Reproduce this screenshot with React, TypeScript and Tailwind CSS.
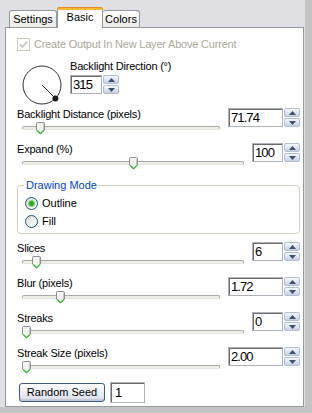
import React from 'react';

type Row = { label: string; value: string; thumb: number; wide: boolean };

const topRows: Row[] = [
  { label: 'Backlight Distance (pixels)', value: '71.74', thumb: 19, wide: true },
  { label: 'Expand (%)', value: '100', thumb: 112, wide: false },
];

const bottomRows: Row[] = [
  { label: 'Slices', value: '6', thumb: 15, wide: false },
  { label: 'Blur (pixels)', value: '1.72', thumb: 39, wide: true },
  { label: 'Streaks', value: '0', thumb: 5, wide: false },
  { label: 'Streak Size (pixels)', value: '2.00', thumb: 5, wide: true },
];

function Arrow({ up }: { up?: boolean }) {
  return (
    <div className="w-[16px] h-[9px] rounded-[2px] border border-[#b4bfd6] bg-gradient-to-b from-[#f6f8fc] to-[#c7d1e6] flex items-center justify-center">
      <svg width="7" height="4" viewBox="0 0 7 4">
        <path d={up ? 'M0 4 L3.5 0 L7 4 Z' : 'M0 0 L3.5 4 L7 0 Z'} fill="#3f4f6e" />
      </svg>
    </div>
  );
}

function Spin({ value, width }: { value: string; width: string }) {
  return (
    <div className="flex items-center gap-[1px]">
      <div
        className={`${width} h-[19px] border border-[#aeb3bb] shadow-[inset_1px_1px_0_#6b6b6b] bg-white flex items-center pl-[2px] text-[13px] tracking-[-0.9px] text-black`}
      >
        {value}
      </div>
      <div className="flex flex-col gap-[1px]">
        <Arrow up />
        <Arrow />
      </div>
    </div>
  );
}

function Thumb() {
  return (
    <svg width="9" height="13" viewBox="0 0 9 13">
      <path
        d="M1.5 0.5 H7.5 Q8.5 0.5 8.5 1.5 V8 L4.5 12 L0.5 8 V1.5 Q0.5 0.5 1.5 0.5 Z"
        fill="#f3f3ef"
        stroke="#8c8f92"
      />
      <path d="M1.2 8.4 L4.5 11.6 L7.8 8.4" stroke="#2fbf2f" strokeWidth="1.2" fill="none" />
      <path d="M7.5 1.5 V8" stroke="#c9c9c4" />
    </svg>
  );
}

function SliderRow({ row }: { row: Row }) {
  return (
    <div className="flex items-start h-[35px]">
      <div className="flex-1 flex flex-col">
        <div className="h-[13px] leading-[13px] tracking-[-0.2px]">{row.label}</div>
        <div className="relative h-[14px]">
          <div className="absolute left-[5px] right-0 top-[5px] h-[4px] rounded-[2px] border border-[#a9a8a2] border-b-[#e4e3dc] bg-[#eeede6]" />
          <div className="absolute top-[1px]" style={{ left: row.thumb }}>
            <Thumb />
          </div>
        </div>
      </div>
      <div className="ml-[8px]">
        <Spin value={row.value} width={row.wide ? 'w-[55px]' : 'w-[31px]'} />
      </div>
    </div>
  );
}

function Radio({ checked, label }: { checked?: boolean; label: string }) {
  return (
    <div className="flex items-center h-[13px]">
      <div className="w-[13px] h-[13px] rounded-full border border-[#1c5180] bg-gradient-to-br from-[#dcdcd5] to-white flex items-center justify-center">
        {checked && <div className="w-[5px] h-[5px] rounded-full bg-[#2da82d] shadow-[0_0_0_1px_#7ed97b]" />}
      </div>
      <span className="ml-[4px] leading-[13px]">{label}</span>
    </div>
  );
}

export default function App() {
  return (
    <div className="w-[312px] h-[413px] bg-[#c4c4c4] overflow-hidden font-['Liberation_Sans',Arial,sans-serif] text-[11px] text-black">
      <div className="w-[305px] h-[407px] bg-[#e0e0e4] pl-[5px] flex flex-col">
        {/* tab strip */}
        <div className="h-[27px] flex items-end pl-[4px]">
          <div className="w-[48px] h-[17px] border border-b-0 border-[#919b9c] rounded-t-[3px] bg-gradient-to-b from-white to-[#ecebe6] flex items-center justify-center leading-none">
            Settings
          </div>
          <div className="relative z-10 w-[46px] h-[21px] -mb-[1px] border border-b-0 border-[#919b9c] rounded-t-[3px] bg-white flex flex-col">
            <div className="h-[3px] -mx-[1px] -mt-[1px] rounded-t-[3px] bg-[#f8b838] border-t border-[#e68b2c]" />
            <div className="flex-1 flex items-center justify-center leading-none pb-[3px]">Basic</div>
          </div>
          <div className="w-[37px] h-[17px] border border-b-0 border-l-0 border-[#919b9c] rounded-t-[3px] bg-gradient-to-b from-white to-[#ecebe6] flex items-center justify-center leading-none">
            Colors
          </div>
        </div>

        {/* panel */}
        <div className="w-[299px] h-[380px] border border-[#919b9c] bg-white pl-[11px] pr-[3px] pt-[10px] flex flex-col">
          <div className="flex items-center h-[13px]">
            <div className="w-[13px] h-[13px] border border-[#cac8bb] bg-white flex items-center justify-center">
              <svg width="9" height="9" viewBox="0 0 9 9">
                <path d="M1 4.5 L3.5 7 L8 1.8" stroke="#cac8bb" strokeWidth="1.8" fill="none" />
              </svg>
            </div>
            <span className="ml-[4px] text-[#aca899] tracking-[-0.2px] leading-[13px]">
              Create Output In New Layer Above Current
            </span>
          </div>

          <div className="h-[57px] flex items-start">
            <svg className="mt-[13px] ml-[4px]" width="42" height="42" viewBox="0 0 42 42">
              <circle cx="21" cy="21" r="19" fill="none" stroke="#303030" strokeWidth="1" />
              <line x1="21" y1="21" x2="34.4" y2="34.4" stroke="#303030" strokeWidth="1" />
              <circle cx="34.4" cy="34.4" r="3" fill="#1e1e1e" />
            </svg>
            <div className="ml-[7px] mt-[9px] flex flex-col">
              <div className="h-[13px] leading-[13px] tracking-[-0.2px]">Backlight Direction (°)</div>
              <div className="mt-[2px]">
                <Spin value="315" width="w-[32px]" />
              </div>
            </div>
          </div>

          {topRows.map((r) => (
            <SliderRow key={r.label} row={r} />
          ))}

          <div className="relative mt-[7px] h-[49px] border border-[#d0d0bf] rounded-[4px] pl-[7px] pt-[11px] flex flex-col gap-[5px]">
            <span className="absolute -top-[7px] left-[6px] bg-white px-[2px] leading-[13px] text-[#0046d5]">
              Drawing Mode
            </span>
            <Radio checked label="Outline" />
            <Radio label="Fill" />
          </div>

          <div className="mt-[8px] flex flex-col">
            {bottomRows.map((r) => (
              <SliderRow key={r.label} row={r} />
            ))}
          </div>

          <div className="flex items-center">
            <button className="ml-[2px] w-[86px] h-[19px] rounded-[3px] border border-[#3c5a82] bg-gradient-to-b from-white to-[#d8dce6] shadow-[inset_0_-2px_0_#c4c9d6] flex items-center justify-center leading-none text-black">
              Random Seed
            </button>
            <div className="ml-[5px] w-[35px] h-[21px] border border-[#aeb3bb] shadow-[inset_1px_1px_0_#6b6b6b] bg-white flex items-center pl-[4px] text-[13px]">
              1
            </div>
          </div>
        </div>
      </div>
    </div>
  );
}
